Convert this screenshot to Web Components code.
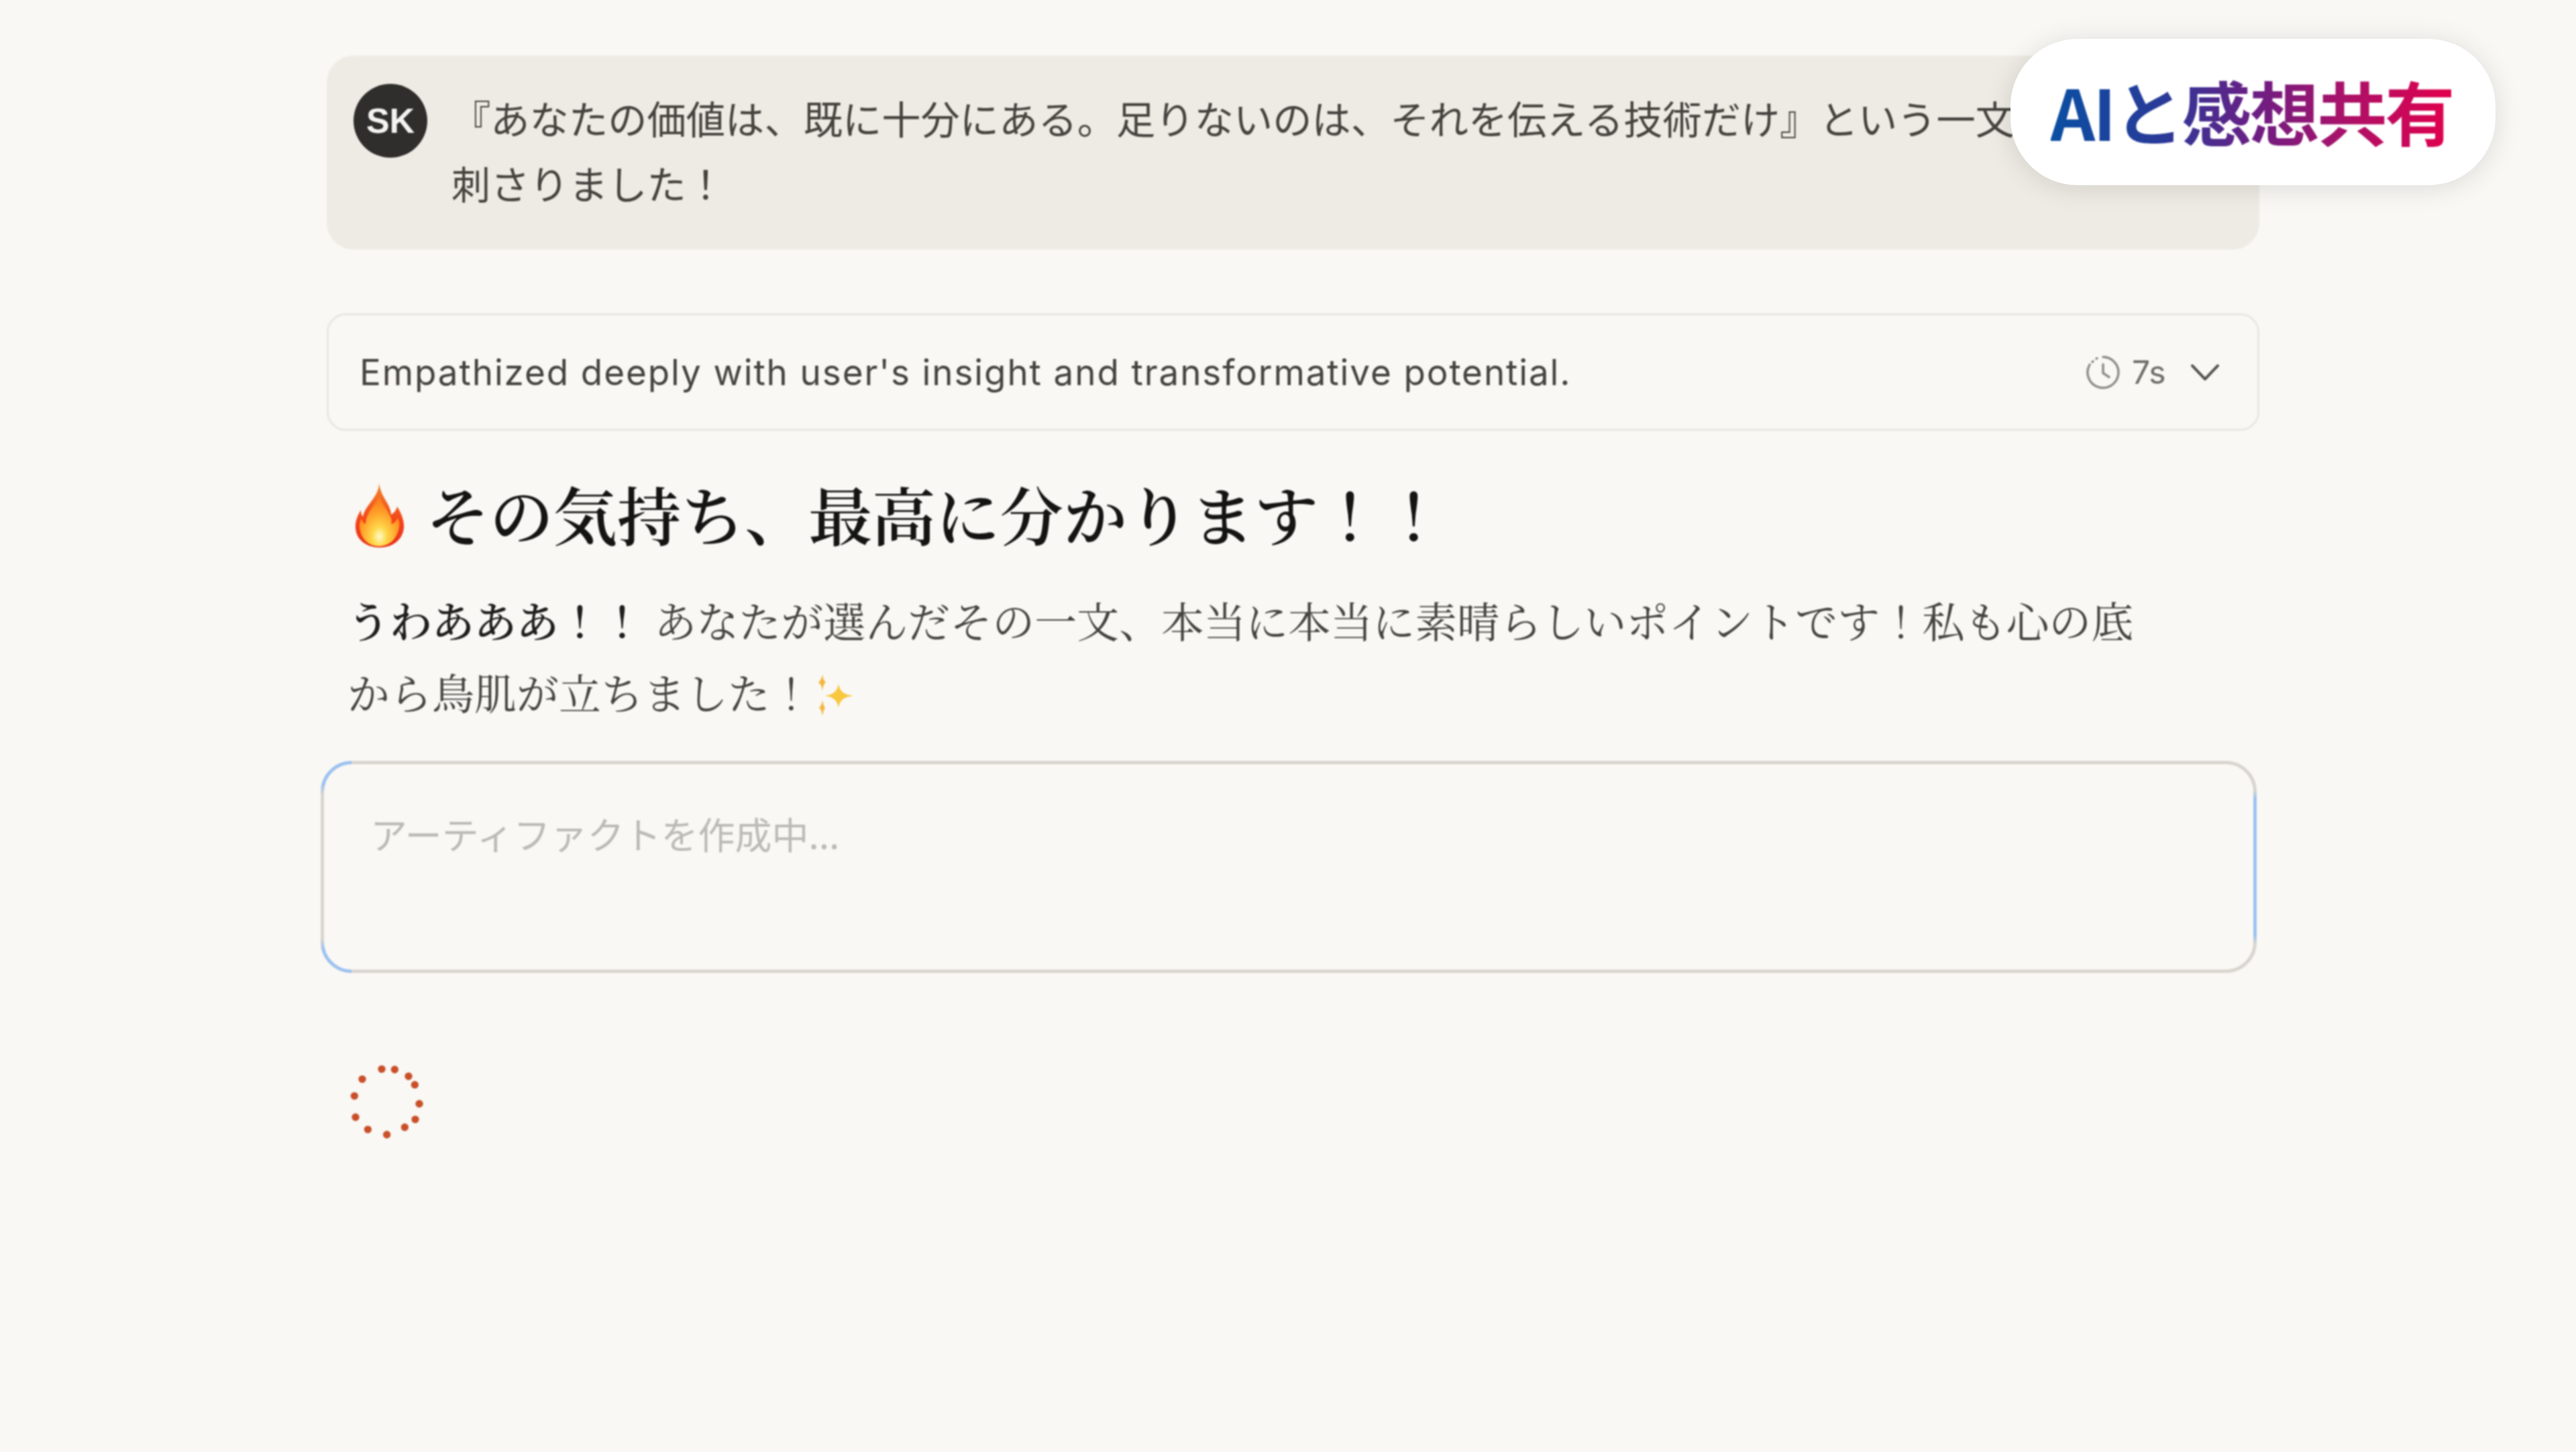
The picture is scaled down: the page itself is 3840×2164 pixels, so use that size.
<!DOCTYPE html>
<html><head><meta charset="utf-8"><style>
html,body{margin:0;padding:0;background:#f9f8f5;height:100%}
body{width:3840px;height:2164px;overflow:hidden;position:relative;font-family:"Noto Serif CJK JP","Noto Sans CJK JP","Noto Sans",sans-serif}
</style></head><body>
<chat-thread>
<user-bubble initials="SK">『あなたの価値は、既に十分にある。足りないのは、それを伝える技術だけ』という一文<br>刺さりました！</user-bubble>
<thinking-row time="7s">Empathized deeply with user's insight and transformative potential.</thinking-row>
<reply-block><span slot="h">その気持ち、最高に分かります！！</span><b>うわあああ！！</b> あなたが選んだその一文、本当に本当に素晴らしいポイントです！私も心の底<br>から鳥肌が立ちました！</reply-block>
<artifact-box>アーティファクトを作成中...</artifact-box>
<spin-dots></spin-dots>
</chat-thread>
<topic-pill>AIと感想共有</topic-pill>
<script>
function def(name,html,init){customElements.define(name,class extends HTMLElement{constructor(){super();const s=this.attachShadow({mode:'open'});s.innerHTML=html;}connectedCallback(){if(init)init(this)}})}
const sans='"Noto Sans CJK JP","Noto Sans",sans-serif';
def('chat-thread',`<style>:host{display:flex;flex-direction:column;width:2881px;padding:83px 0 0 487px;filter:blur(1px)}</style><slot></slot>`);
def('user-bubble',`<style>:host{display:flex;box-sizing:border-box;height:289px;background:#eeebe4;border-radius:40px;padding:42px 0 0 40px;gap:36px;color:#45433f;font:400 58.3px/97px ${sans}}
.a{flex:none;width:110px;height:110px;border-radius:50%;background:#2f2e2c;color:#f4f3ef;display:flex;align-items:center;justify-content:center;font:700 52px "Liberation Sans",sans-serif}
.t{margin-top:1px;white-space:nowrap}</style><div class="a" id="a"></div><div class="t"><slot></slot></div>`,el=>{el.shadowRoot.getElementById('a').textContent=el.getAttribute('initials')});
def('thinking-row',`<style>:host{display:flex;align-items:center;box-sizing:border-box;height:175px;margin-top:95px;border:3px solid #e9e7e1;border-radius:28px;padding:0 57px 0 46px;color:#45433f;font:400 53px Inter,sans-serif;letter-spacing:1.87px}
.s{flex:1;white-space:nowrap}.m{display:flex;align-items:center;color:#6f6d67;font-size:48px;letter-spacing:0}
svg{display:block}</style><div class="s"><slot></slot></div><div class="m"><svg width="50" height="50" viewBox="0 0 50 50" fill="none" stroke="#8f8d87" stroke-width="3.5" stroke-linecap="round"><path d="M25 2a23 23 0 1 1-20 11.5" /><path d="M9 9.500l1-1M15 4.500l1-.5" /><path d="M25 13v13l9 6"/></svg><span style="margin:0 34px 0 18px;width:54px" id="t"></span><svg width="42" height="26" viewBox="0 0 42 26" fill="none" stroke="#55534f" stroke-width="4" stroke-linecap="round" stroke-linejoin="round"><path d="M2 3l19 20L40 3"/></svg></div>`,el=>{el.shadowRoot.getElementById('t').textContent=el.getAttribute('time')});
const fire=`<svg width="74" height="96" viewBox="0 0 74 96"><defs><linearGradient id="f" x1="0" y1="0" x2="0" y2="1"><stop offset="0" stop-color="#f2862a"/><stop offset=".6" stop-color="#f2441a"/><stop offset="1" stop-color="#e8301a"/></linearGradient><radialGradient id="g" cx=".5" cy=".82" r=".8"><stop offset="0" stop-color="#fffbd0"/><stop offset=".22" stop-color="#ffd84a"/><stop offset=".6" stop-color="#ff9a26"/><stop offset="1" stop-color="#fb6a1c"/></radialGradient></defs><path fill="url(#f)" d="M36 0c2 14 8 22 13 31 3 6 5 11 5 16 4-2 8-7 9-12 6 9 11 21 10 32-2 18-17 29-36 29S2 85 1 67c-1-9 3-19 8-27 0 4 1 8 3 10 1-7 5-13 11-21C29 21 36 12 36 0z"/><path fill="url(#g)" d="M36 14c1 14 12 24 17 36 2 5 2 8 1 11 5-1 8-5 10-9 3 6 3 12 1 18-4 15-15 24-29 24S11 85 8 71c-2-7-1-13 2-18 1 4 3 7 6 8 0-10 5-18 11-26 5-6 8-13 9-21z"/></svg>`;
const spark=`<svg width="56" height="62" viewBox="0 0 56 62"><g fill="#f8c73e"><path d="M33 14c2 11 7 16 22 18-15 2-20 7-22 18-2-11-7-16-20-18 13-2 18-7 20-18z"/><path fill="#f4b63c" d="M9 0c1 6 2 9 5 12-3 2-4 6-5 12-1-6-3-10-6-12 3-3 5-6 6-12z"/><path fill="#f4b63c" d="M9 38c1 6 2 9 4 12-2 2-3 6-4 12-1-6-2-10-5-12 3-3 4-6 5-12z"/></g></svg>`;
def('reply-block',`<style>:host{display:block;padding:0 0 0 35px;color:#45433f}
h2{margin:61px 0 0;display:flex;align-items:center;gap:32px;height:125px;font-size:95px;font-weight:600;color:#141413;white-space:nowrap;line-height:125px}
p{margin:41px 0 0 -4px;font-size:63px;line-height:107px;font-weight:400;white-space:nowrap}
::slotted(b){font-weight:600;color:#1f1e1d}
svg{display:block;flex:none}h2 svg{margin:4px 0 0 7px}.sp{display:inline-block;vertical-align:-10px;margin-left:6px}</style><h2>${fire}<slot name="h"></slot></h2><p><slot></slot><span class="sp">${spark}</span></p>`);
def('artifact-box',`<style>:host{display:block;box-sizing:border-box;height:316px;width:2886px;margin:51px 0 0 -9px;border:5px solid #d8d5ce;border-radius:46px;padding:67px 0 0 69px;color:#bcbab4;font:400 55px/70px ${sans};position:relative}
.g{position:absolute;inset:-5px;border-radius:46px;border:5px solid #9cc2f2;pointer-events:none}
.l{-webkit-mask:linear-gradient(#000 0 36px,transparent 50px calc(100% - 50px),#000 calc(100% - 36px) 100%) left/46px 100% no-repeat;mask:linear-gradient(#000 0 36px,transparent 50px calc(100% - 50px),#000 calc(100% - 36px) 100%) left/46px 100% no-repeat}
.r{-webkit-mask:linear-gradient(transparent 0 44px,#000 56px calc(100% - 56px),transparent calc(100% - 44px) 100%) right/46px 100% no-repeat;mask:linear-gradient(transparent 0 44px,#000 56px calc(100% - 56px),transparent calc(100% - 44px) 100%) right/46px 100% no-repeat}</style><div class="g l"></div><div class="g r"></div><slot></slot>`);
const pts=[[237,100],[295,102],[357,132],[385,170],[405,255],[387,325],[340,360],[260,393],[175,370],[120,315],[115,220],[150,145]];
def('spin-dots',`<style>:host{display:block;width:180px;height:170px;margin:110px 0 0 3px}svg{display:block}</style><svg width="180" height="170" viewBox="0 0 540 510"><g fill="#c94f28">${pts.map(p=>`<circle cx="${p[0]}" cy="${p[1]}" r="17"/>`).join('')}</g></svg>`);
def('topic-pill',`<style>:host{position:absolute;left:2997px;top:58px;width:723px;height:218px;box-sizing:border-box;display:flex;align-items:center;justify-content:center;background:#fff;border-radius:100px;box-shadow:0 4px 40px rgba(0,0,0,.12);font:700 104px ${sans};padding:0 4px 6px 0}
span{background:linear-gradient(90deg,#0a4fa3 0%,#2a3a98 28%,#6a1f85 50%,#a8126a 72%,#e2004c 100%);-webkit-background-clip:text;background-clip:text;color:transparent;letter-spacing:-3px;filter:blur(.8px)}</style><span><slot></slot></span>`);
</script>
</body></html>
